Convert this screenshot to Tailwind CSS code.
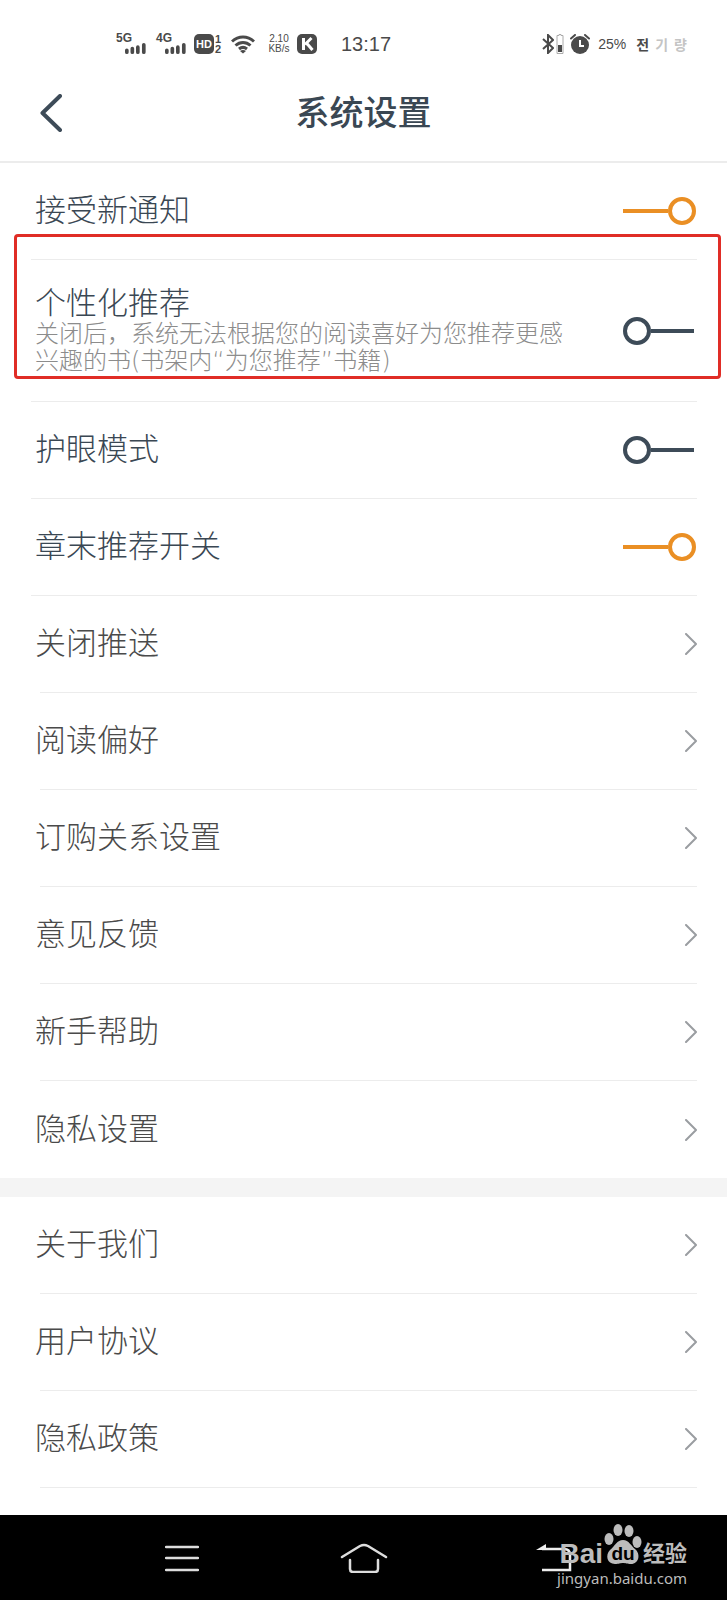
<!DOCTYPE html>
<html lang="zh-CN">
<head>
    <meta charset="UTF-8">
    <meta name="viewport" content="width=device-width, initial-scale=1.0">
    <title>系统设置</title>
    <script src="https://cdn.jsdelivr.net/npm/@tailwindcss/browser@4"></script>
</head>
<body class="flex min-h-screen flex-col bg-white font-['Liberation_Sans','Noto_Sans_CJK_SC',sans-serif] text-[#3a4753]">
    <!-- Icons used more than once -->
    <svg class="hidden">
        <symbol id="chevron" viewBox="0 0 12 22"><path d="M1 1l10 10L1 21" fill="none" stroke="#9a9da1" stroke-width="2" stroke-linecap="round" stroke-linejoin="round"/></symbol>
        <symbol id="switch-on" viewBox="0 0 74 30"><path d="M0 15h45" stroke="#ea8f24" stroke-width="4"/><circle cx="59" cy="15" r="12" fill="none" stroke="#ea8f24" stroke-width="4"/></symbol>
        <symbol id="switch-off" viewBox="0 0 74 30"><path d="M28 15h43" stroke="#3d4b58" stroke-width="4"/><circle cx="14" cy="15" r="12" fill="none" stroke="#3d4b58" stroke-width="4"/></symbol>
        <symbol id="signal" viewBox="0 0 24 12"><path d="M2 8v2M8 6v4M14 4.500v5.500M20.500 2v8" stroke="#4a4a4a" stroke-width="4" stroke-linecap="round"/></symbol>
    </svg>

    <!-- Status bar -->
    <div class="flex items-center pt-[34px] pr-10 pb-[10px] pl-[116px] text-[#4a4a4a]">
        <div class="flex h-5 flex-col">
            <span class="text-[12px] leading-[9px] font-bold">5G</span>
            <svg class="ml-2 h-3 w-6"><use href="#signal"/></svg>
        </div>
        <div class="ml-2 flex h-5 flex-col">
            <span class="text-[12px] leading-[9px] font-bold">4G</span>
            <svg class="ml-2 h-3 w-6"><use href="#signal"/></svg>
        </div>
        <span class="ml-1.5 flex h-5 w-5 items-center justify-center rounded-[5px] bg-[#4a4a4a] text-[11px] font-bold text-white">HD</span>
        <span class="ml-px flex w-2 flex-col text-[11px] leading-[10px] font-bold"><span>1</span><span>2</span></span>
        <svg class="ml-2 h-5 w-6" viewBox="0 0 24 20" fill="none" stroke="#4a4a4a" stroke-width="3">
            <path d="M1 7.500C7.500 1.500 16.500 1.500 23 7.500M4.500 11.500c4.500-4 10.500-4 15 0M8 15c2.500-2 5.500-2 8 0"/>
            <path d="M12 19.500l-3-2.500c2-1.500 4-1.500 6 0z" fill="#4a4a4a" stroke="none"/>
        </svg>
        <span class="ml-3 flex w-6 flex-col text-center text-[10px] leading-[10px]"><span>2.10</span><span>KB/s</span></span>
        <svg class="ml-1.5 h-5 w-5" viewBox="0 0 20 20">
            <rect width="20" height="20" rx="5" fill="#4a4a4a"/>
            <path d="M6.500 4v12M14.500 4L8 10.500M9.500 9l6 7" fill="none" stroke="#fff" stroke-width="3"/>
        </svg>
        <time class="ml-6 text-[20px] leading-5">13:17</time>
        <svg class="ml-auto h-5 w-3" viewBox="0 0 12 20" fill="none" stroke="#4a4a4a" stroke-width="2"><path d="M1 5l10 9-5 5V1l5 5-10 9"/></svg>
        <svg class="ml-0.5 h-5 w-2" viewBox="0 0 8 20">
            <path d="M3 0.500h2v1h2v18H1v-18h2z" fill="none" stroke="#aaa"/>
            <path d="M2 11h4v7H2z" fill="#4a4a4a"/>
        </svg>
        <svg class="ml-1.5 h-5 w-5" viewBox="0 0 20 20">
            <circle cx="10" cy="11" r="9" fill="#4a4a4a"/>
            <path d="M1 4.500L5 1M19 4.500L15 1" stroke="#4a4a4a" stroke-width="2" stroke-linecap="round"/>
            <path d="M10 6v6h4" fill="none" stroke="#fff" stroke-width="2"/>
        </svg>
        <span class="ml-2 text-[14px] leading-5">25%</span>
        <span lang="ko" class="ml-2.5 flex gap-1.5 font-['Noto_Sans_CJK_KR',sans-serif] text-[14px] leading-5 font-bold"><span>전</span><span class="text-[#c4c4c4]">기</span><span class="text-[#c4c4c4]">량</span></span>
    </div>

    <!-- Header -->
    <header class="relative flex h-[99px] items-center justify-center border-b-2 border-[#ececec]">
        <button type="button" aria-label="返回" class="absolute left-10">
            <svg class="h-[38px] w-[22px]" viewBox="0 0 22 38"><path d="M20 2L2.500 19 20 36" fill="none" stroke="#3d4b58" stroke-width="4" stroke-linecap="round" stroke-linejoin="round"/></svg>
        </button>
        <h1 class="text-[34px] leading-10 font-medium">系统设置</h1>
    </header>

    <main class="flex-1">
        <!-- Switches -->
        <section class="pr-[30px] pl-[31px] text-[31px] leading-[34px] font-light">
            <label class="flex h-[97px] items-center justify-between border-b border-[#ececec] pl-1">
                <span>接受新通知</span>
                <input type="checkbox" role="switch" class="peer sr-only" checked>
                <svg class="hidden h-[30px] w-[74px] peer-checked:block"><use href="#switch-on"/></svg>
                <svg class="h-[30px] w-[74px] peer-checked:hidden"><use href="#switch-off"/></svg>
            </label>
            <label class="relative flex h-[142px] items-center justify-between border-b border-[#ececec] pl-1">
                <span class="max-w-[536px]">
                    <span class="block">个性化推荐</span>
                    <span class="block font-['DejaVu_Sans','Noto_Sans_CJK_SC',sans-serif] text-[24px] leading-[27px] text-[#8c8c8c]">关闭后，系统无法根据您的阅读喜好为您推荐更感兴趣的书(书架内“为您推荐”书籍)</span>
                </span>
                <input type="checkbox" role="switch" class="peer sr-only">
                <svg class="hidden h-[30px] w-[74px] peer-checked:block"><use href="#switch-on"/></svg>
                <svg class="h-[30px] w-[74px] peer-checked:hidden"><use href="#switch-off"/></svg>
                <!-- Red highlight -->
                <span class="pointer-events-none absolute -top-[26px] -right-6 bottom-[22px] -left-[17px] rounded border-3 border-[#e02d26]"></span>
            </label>
            <label class="flex h-[97px] items-center justify-between border-b border-[#ececec] pl-1">
                <span>护眼模式</span>
                <input type="checkbox" role="switch" class="peer sr-only">
                <svg class="hidden h-[30px] w-[74px] peer-checked:block"><use href="#switch-on"/></svg>
                <svg class="h-[30px] w-[74px] peer-checked:hidden"><use href="#switch-off"/></svg>
            </label>
            <label class="flex h-[97px] items-center justify-between border-b border-[#ececec] pl-1">
                <span>章末推荐开关</span>
                <input type="checkbox" role="switch" class="peer sr-only" checked>
                <svg class="hidden h-[30px] w-[74px] peer-checked:block"><use href="#switch-on"/></svg>
                <svg class="h-[30px] w-[74px] peer-checked:hidden"><use href="#switch-off"/></svg>
            </label>
        </section>

        <!-- Links -->
        <nav class="divide-y divide-[#ececec] pr-[30px] pl-10 text-[31px] leading-[34px] font-light text-[#4a4a4a]">
            <a href="#push" class="flex h-[97px] items-center justify-between"><span class="-ml-[5px]">关闭推送</span><svg class="h-[22px] w-3"><use href="#chevron"/></svg></a>
            <a href="#reading" class="flex h-[97px] items-center justify-between"><span class="-ml-[5px]">阅读偏好</span><svg class="h-[22px] w-3"><use href="#chevron"/></svg></a>
            <a href="#subscription" class="flex h-[97px] items-center justify-between"><span class="-ml-[5px]">订购关系设置</span><svg class="h-[22px] w-3"><use href="#chevron"/></svg></a>
            <a href="#feedback" class="flex h-[97px] items-center justify-between"><span class="-ml-[5px]">意见反馈</span><svg class="h-[22px] w-3"><use href="#chevron"/></svg></a>
            <a href="#help" class="flex h-[97px] items-center justify-between"><span class="-ml-[5px]">新手帮助</span><svg class="h-[22px] w-3"><use href="#chevron"/></svg></a>
            <a href="#privacy" class="flex h-[97px] items-center justify-between"><span class="-ml-[5px]">隐私设置</span><svg class="h-[22px] w-3"><use href="#chevron"/></svg></a>
        </nav>

        <div class="h-[19px] bg-[#f4f4f4]"></div>

        <nav class="pr-[30px] pl-10 text-[31px] leading-[34px] font-light text-[#4a4a4a]">
            <a href="#about" class="flex h-[97px] items-center justify-between border-b border-[#ececec]"><span class="-ml-[5px]">关于我们</span><svg class="h-[22px] w-3"><use href="#chevron"/></svg></a>
            <a href="#agreement" class="flex h-[97px] items-center justify-between border-b border-[#ececec]"><span class="-ml-[5px]">用户协议</span><svg class="h-[22px] w-3"><use href="#chevron"/></svg></a>
            <a href="#policy" class="flex h-[97px] items-center justify-between border-b border-[#ececec]"><span class="-ml-[5px]">隐私政策</span><svg class="h-[22px] w-3"><use href="#chevron"/></svg></a>
        </nav>
    </main>

    <!-- Navigation bar -->
    <footer class="relative flex h-[85px] items-center justify-center gap-[122px] bg-black pl-4">
        <button type="button" aria-label="菜单" class="flex w-15 justify-center">
            <svg class="h-7 w-[34px]" viewBox="0 0 34 28"><path d="M1 3h32M1 14h32M1 26h32" stroke="#ddd" stroke-width="2.500" stroke-linecap="round"/></svg>
        </button>
        <button type="button" aria-label="主页" class="flex w-15 justify-center">
            <svg class="h-[30px] w-12" viewBox="0 0 48 30" fill="none" stroke="#ddd" stroke-width="2.500" stroke-linecap="round" stroke-linejoin="round"><path d="M2 14L20 3q4-2 8 0l18 11M10 17v9q0 3 3 3h22q3 0 3-3v-9"/></svg>
        </button>
        <button type="button" aria-label="返回" class="flex w-19 justify-center">
            <svg class="h-[30px] w-9" viewBox="0 0 36 30"><path d="M6 6h22q6 0 6 6v15H6" fill="none" stroke="#eee" stroke-width="2.500"/><path d="M0 7l10-6v6z" fill="#eee"/></svg>
        </button>
        <!-- Watermark -->
        <a href="#jingyan" class="absolute right-10 bottom-3 flex flex-col items-end text-[#bcbcbc]">
            <span class="flex items-end gap-px">
                <span class="text-[28px] leading-7 font-bold">Bai</span>
                <svg class="mb-1 h-10 w-[38px]" viewBox="0 0 38 40" fill="#bcbcbc">
                    <ellipse cx="5" cy="15" rx="4.500" ry="6"/>
                    <ellipse cx="14" cy="6" rx="4.500" ry="6"/>
                    <ellipse cx="25" cy="7" rx="4.500" ry="6"/>
                    <ellipse cx="33" cy="18" rx="4.500" ry="6"/>
                    <path d="M19 16c6 0 8 6 12 9 6 5 4 15-4 15-4 0-5-1-8-1s-4 1-8 1C3 40 1 31 6 26c5-4 7-10 13-10z"/>
                    <text x="19" y="36" text-anchor="middle" font-size="19" font-weight="bold" fill="#000">du</text>
                </svg>
                <span class="text-[22px] leading-7 font-bold">经验</span>
            </span>
            <span class="font-['Noto_Sans',sans-serif] text-[15px] leading-5">jingyan.baidu.com</span>
        </a>
    </footer>
</body>
</html>
